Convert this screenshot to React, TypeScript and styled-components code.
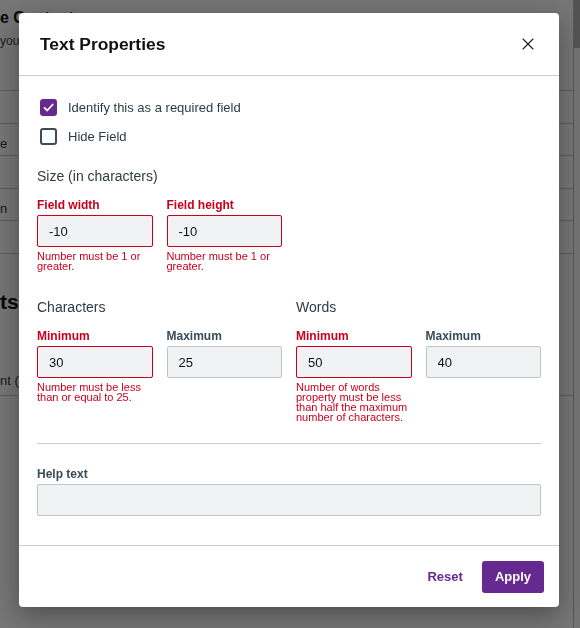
import React from 'react';
import styled, { createGlobalStyle } from 'styled-components';

const purple = '#66298f';
const red = '#c8001e';
const slate = '#394b58';
const ink = '#2d3b45';
const line = '#c7cdd1';

const GlobalStyle = createGlobalStyle`
  html, body {
    margin: 0;
    height: 100%;
    overflow: hidden;
  }
  body {
    font-family: "Liberation Sans", Arial, Helvetica, sans-serif;
    background: #fff;
  }
`;

/* page sitting behind the dialog */
const Page = styled.div`
  display: flex;
  height: 100vh;
  background: #fff;
`;

const PageMain = styled.main`
  flex: 1;
  overflow: hidden;
  color: #111;
`;

const PageTitle = styled.h1`
  margin: 0;
  padding-top: 9px;
  font-size: 16px;
  line-height: 18px;
  font-weight: bold;
  white-space: nowrap;
`;

const PageSub = styled.p`
  margin: 7px 0 0;
  font-size: 12px;
  line-height: 14px;
  color: #444;
`;

const PageTable = styled.div`
  margin-top: 42px;
  border-bottom: 1px solid #c4c4c4;
`;

const PageRow = styled.div`
  height: 32.5px;
  border-top: 1px solid #c4c4c4;
  display: flex;
  align-items: flex-end;
  padding-bottom: 4px;
  box-sizing: border-box;
  font-size: 13px;
  color: #333;
`;

const PageSection = styled.h2`
  margin: 36px 0 0;
  font-size: 21px;
  line-height: 24px;
  font-weight: bold;
`;

const PageNote = styled.div`
  margin-top: 52px;
  height: 30px;
  font-size: 13px;
  color: #333;
  border-bottom: 1px solid #c4c4c4;
  box-sizing: border-box;
  display: flex;
  align-items: center;
`;

const Scrollbar = styled.div`
  width: 6px;
  border-left: 1px solid #bdbdbd;
  background: #fafafa;
`;

const Thumb = styled.div`
  height: 48px;
  background: #b4b4b4;
`;

/* dialog */
const Overlay = styled.div`
  position: fixed;
  inset: 0;
  background: rgba(0, 0, 0, 0.54);
  display: flex;
  justify-content: center;
  align-items: flex-start;
  padding: 13px 2px 0 0;
`;

const Dialog = styled.div`
  width: 540px;
  background: #fff;
  border-radius: 4px;
  box-shadow: 0 8px 26px rgba(0, 0, 0, 0.35);
  display: flex;
  flex-direction: column;
`;

const Header = styled.header`
  height: 63px;
  box-sizing: border-box;
  display: flex;
  align-items: center;
  justify-content: space-between;
  padding: 0 25px 0 21px;
  border-bottom: 1px solid ${line};
`;

const Title = styled.h2`
  margin: 0;
  font-size: 17.4px;
  font-weight: bold;
  color: #111;
`;

const CloseButton = styled.button`
  width: 12px;
  height: 12px;
  padding: 0;
  border: none;
  background: none;
  display: flex;
  cursor: pointer;
`;

const Body = styled.div`
  padding: 23px 18px 29px;
`;

const CheckRow = styled.label`
  display: flex;
  align-items: center;
  gap: 11px;
  padding-left: 3px;
  height: 17px;
  font-size: 13px;
  color: ${ink};

  & + & {
    margin-top: 12px;
  }
`;

const Box = styled.span<{ $checked?: boolean }>`
  width: 17px;
  height: 17px;
  box-sizing: border-box;
  border-radius: 3px;
  display: flex;
  align-items: center;
  justify-content: center;
  background: ${(p) => (p.$checked ? purple : '#fff')};
  border: ${(p) => (p.$checked ? 'none' : `2px solid ${slate}`)};
`;

const SectionHeading = styled.h3<{ $top: number }>`
  margin: ${(p) => p.$top}px 0 13px;
  font-size: 14px;
  line-height: 18px;
  font-weight: normal;
  color: ${ink};
`;

const Columns = styled.div`
  display: grid;
  grid-template-columns: 1fr 1fr;
  column-gap: 14px;
`;

const Pair = styled.div`
  display: grid;
  grid-template-columns: 1fr 1fr;
  column-gap: 14px;
  align-items: start;
`;

const Field = styled.div`
  display: flex;
  flex-direction: column;
`;

const FieldLabel = styled.label<{ $error?: boolean }>`
  font-size: 12px;
  line-height: 14px;
  font-weight: bold;
  color: ${(p) => (p.$error ? red : slate)};
  margin-bottom: 3px;
`;

const Input = styled.input<{ $error?: boolean }>`
  height: 32px;
  box-sizing: border-box;
  width: 100%;
  border: 1px solid ${(p) => (p.$error ? red : '#bfc4c8')};
  border-radius: 2px;
  background: #f1f2f3;
  padding: 0 11px;
  font-family: inherit;
  font-size: 13px;
  color: #111;
  outline: none;
`;

const ErrorText = styled.div`
  margin-top: 4px;
  font-size: 11px;
  line-height: 10px;
  color: ${red};
`;

const Divider = styled.hr`
  margin: 21px 0 23px;
  border: none;
  border-top: 1px solid ${line};
`;

const Footer = styled.footer`
  height: 62px;
  box-sizing: border-box;
  border-top: 1px solid ${line};
  display: flex;
  align-items: center;
  justify-content: flex-end;
  gap: 8px;
  padding: 0 15px;
`;

const Button = styled.button<{ $primary?: boolean }>`
  height: 32px;
  padding: 0 ${(p) => (p.$primary ? 13 : 11)}px;
  border: none;
  border-radius: 3px;
  font-family: inherit;
  font-size: 13px;
  font-weight: bold;
  cursor: pointer;
  background: ${(p) => (p.$primary ? purple : 'transparent')};
  color: ${(p) => (p.$primary ? '#fff' : purple)};
`;

interface NumberFieldProps {
  label: string;
  value: string;
  error?: string;
}

const NumberField: React.FC<NumberFieldProps> = ({ label, value, error }) => (
  <Field>
    <FieldLabel $error={!!error}>{label}</FieldLabel>
    <Input $error={!!error} defaultValue={value} />
    {error && <ErrorText>{error}</ErrorText>}
  </Field>
);

const Checkbox: React.FC<{ checked?: boolean; children: React.ReactNode }> = ({ checked, children }) => (
  <CheckRow>
    <Box $checked={checked}>
      {checked && (
        <svg width="13" height="13" viewBox="0 0 13 13">
          <path d="M2.5 6.8l2.8 2.7 5.4-6" fill="none" stroke="#fff" strokeWidth="1.8" strokeLinecap="round" strokeLinejoin="round" />
        </svg>
      )}
    </Box>
    {children}
  </CheckRow>
);

export default function App() {
  return (
    <>
      <GlobalStyle />
      <Page>
        <PageMain>
          <PageTitle>e Content</PageTitle>
          <PageSub>you</PageSub>
          <PageTable>
            <PageRow />
            <PageRow>e</PageRow>
            <PageRow />
            <PageRow>n</PageRow>
            <PageRow />
          </PageTable>
          <PageSection>ts</PageSection>
          <PageNote>nt (</PageNote>
        </PageMain>
        <Scrollbar>
          <Thumb />
        </Scrollbar>
      </Page>

      <Overlay>
        <Dialog role="dialog" aria-label="Text Properties">
          <Header>
            <Title>Text Properties</Title>
            <CloseButton aria-label="Close">
              <svg width="12" height="12" viewBox="0 0 12 12">
                <path d="M1 1l10 10M11 1L1 11" stroke="#1a1a1a" strokeWidth="1.1" strokeLinecap="round" />
              </svg>
            </CloseButton>
          </Header>

          <Body>
            <Checkbox checked>Identify this as a required field</Checkbox>
            <Checkbox>Hide Field</Checkbox>

            <SectionHeading $top={22}>Size (in characters)</SectionHeading>
            <Columns>
              <Pair>
                <NumberField label="Field width" value="-10" error="Number must be 1 or greater." />
                <NumberField label="Field height" value="-10" error="Number must be 1 or greater." />
              </Pair>
            </Columns>

            <Columns>
              <div>
                <SectionHeading $top={27}>Characters</SectionHeading>
                <Pair>
                  <NumberField label="Minimum" value="30" error="Number must be less than or equal to 25." />
                  <NumberField label="Maximum" value="25" />
                </Pair>
              </div>
              <div>
                <SectionHeading $top={27}>Words</SectionHeading>
                <Pair>
                  <NumberField
                    label="Minimum"
                    value="50"
                    error="Number of words property must be less than half the maximum number of characters."
                  />
                  <NumberField label="Maximum" value="40" />
                </Pair>
              </div>
            </Columns>

            <Divider />

            <Field>
              <FieldLabel>Help text</FieldLabel>
              <Input />
            </Field>
          </Body>

          <Footer>
            <Button>Reset</Button>
            <Button $primary>Apply</Button>
          </Footer>
        </Dialog>
      </Overlay>
    </>
  );
}
